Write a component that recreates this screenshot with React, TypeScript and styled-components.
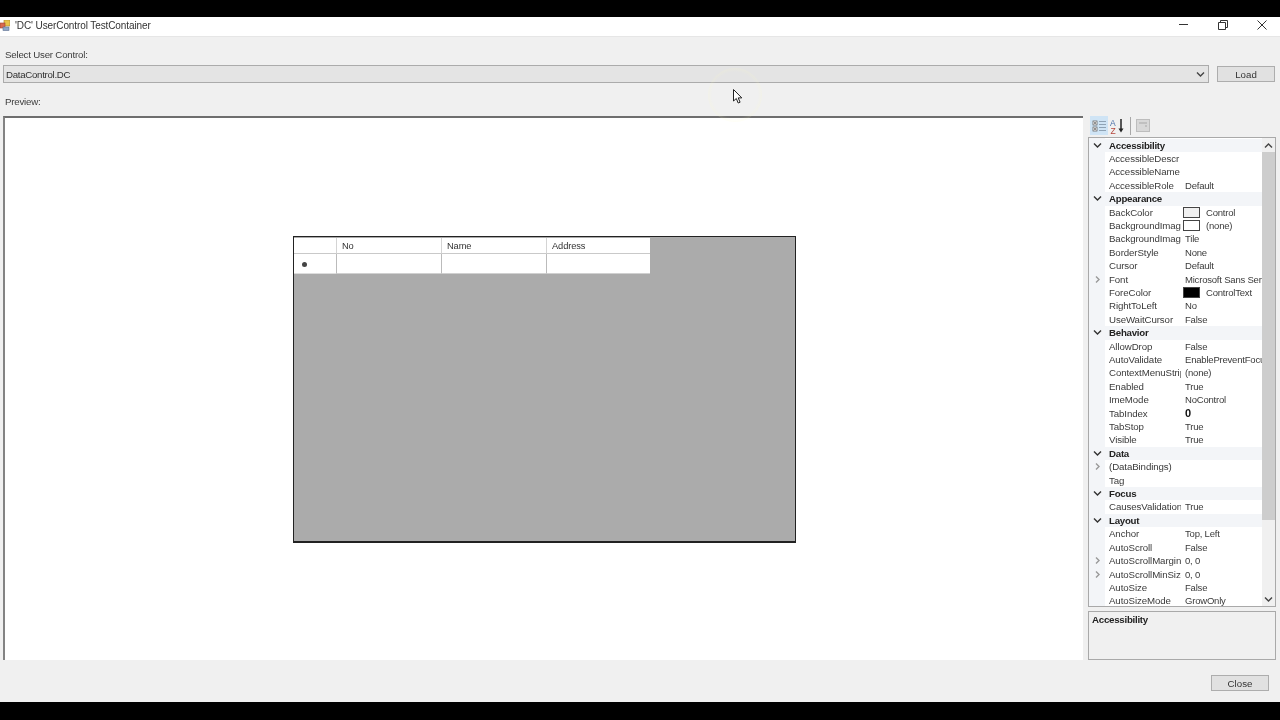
import React from "react";
import styled, { createGlobalStyle } from "styled-components";

const Global = createGlobalStyle`
  html, body { margin: 0; padding: 0; background: #000; }
  body { font-family: "Liberation Sans", Arial, sans-serif; font-size: 10px; color: #303030; overflow: hidden; }
  * { box-sizing: border-box; }
`;

const Screen = styled.div`
  position: relative;
  width: 1280px;
  height: 720px;
  background: #000;
  padding: 17px 0 18px;
  display: flex;
  flex-direction: column;
  filter: blur(0.35px);
`;
const TitleBar = styled.header`
  height: 19px;
  background: #fff;
  display: flex;
  align-items: center;
  flex: none;
  padding-bottom: 3px;
  font-size: 10px;
  letter-spacing: -0.1px;
  color: #333;
`;
const TitleText = styled.span`
  margin-left: 5px;
  flex: 1;
`;
const WinButton = styled.span`
  width: 39px;
  height: 16px;
  padding-left: 2px;
  display: flex;
  align-items: center;
  justify-content: center;
`;
const Form = styled.main`
  flex: 1;
  background: #f0f0f0;
  border-top: 1px solid #e6e6e6;
  display: flex;
  flex-direction: column;
  min-height: 0;
`;
const Label = styled.div`
  margin-left: 5px;
  height: 12px;
  line-height: 12px;
  font-size: 9.7px;
  letter-spacing: -0.2px;
  color: #3c3c3c;
`;
const SelectLabel = styled(Label)`
  margin-top: 12px;
`;
const PreviewLabel = styled(Label)`
  margin-top: 13px;
`;
const ComboRow = styled.div`
  display: flex;
  align-items: center;
  margin: 4px 5px 0 3px;
`;
const Combo = styled.div`
  width: 1206px;
  height: 18px;
  background: #e4e4e4;
  border: 1px solid #ababab;
  display: flex;
  align-items: center;
  justify-content: space-between;
  padding: 0 3px 0 2px;
  font-size: 9.7px;
  letter-spacing: -0.3px;
  color: #303030;
`;
const PushButton = styled.button`
  width: 58px;
  height: 16px;
  padding: 0;
  background: #e1e1e1;
  border: 1px solid #adadad;
  font: 9.7px "Liberation Sans", Arial, sans-serif;
  color: #333;
`;
const LoadButton = styled(PushButton)`
  margin-left: 8px;
`;
const Body = styled.div`
  display: flex;
  margin: 8px 0 0 3px;
  height: 544px;
`;
const PreviewPane = styled.section`
  width: 1080px;
  background: #fff;
  border-left: 2px solid #838383;
  border-top: 2px solid #6e6e6e;
  padding: 118px 0 0 288px;
`;
const DataGrid = styled.div`
  width: 503px;
  height: 307px;
  background: #ababab;
  border: 1px solid #222;
  border-width: 1px 1px 2px 1px;
  padding-top: 1px;
`;
const GridTable = styled.div`
  display: grid;
  grid-template-columns: 42px 105px 105px 104px;
  grid-template-rows: 16px 20px;
  width: 356px;
  background: #fff;
`;
const HeadCell = styled.div`
  border-bottom: 1px solid #c9c9c9;
  border-left: 1px solid #d4d4d4;
  padding-left: 5px;
  font-size: 9.3px;
  letter-spacing: -0.1px;
  line-height: 16px;
  color: #333;
  &:first-child { border-left: 0; }
`;
const RowHead = styled.div`
  display: flex;
  align-items: center;
  padding: 2px 0 0 8px;
  border-bottom: 1px solid #ddd;
`;
const Dot = styled.span`
  width: 5px;
  height: 5px;
  border-radius: 50%;
  background: #444;
`;
const Cell = styled.div`
  border-left: 1px solid #bbb;
  border-bottom: 1px solid #d0d0d0;
`;
const PropsColumn = styled.aside`
  width: 188px;
  margin-left: 5px;
  display: flex;
  flex-direction: column;
`;
const ToolBar = styled.div`
  height: 21px;
  display: flex;
  align-items: center;
  padding: 0 0 2px 2px;
`;
const ToolButton = styled.span<{ $active?: boolean }>`
  width: 18px;
  height: 19px;
  display: flex;
  align-items: center;
  justify-content: center;
  background: ${(p) => (p.$active ? "#cfe4f5" : "transparent")};
`;
const ToolSep = styled.span`
  width: 1px;
  height: 18px;
  margin: 0 5px 0 4px;
  background: #a8a8a8;
`;
const PropGrid = styled.div`
  height: 470px;
  border: 1px solid #a9a9a9;
  background: #fff;
  display: flex;
`;
const PropList = styled.div`
  flex: 1;
  min-width: 0;
  padding-top: 0.5px;
  background: linear-gradient(90deg, #f3f5f8 16px, #fff 16px);
`;
const Row = styled.div<{ $cat?: boolean }>`
  height: 13.41px;
  line-height: 13.41px;
  display: flex;
  align-items: center;
  font-size: 9.7px;
  letter-spacing: -0.1px;
  color: #3a3a3a;
  white-space: nowrap;
  background: ${(p) => (p.$cat ? "#f3f5f8" : "transparent")};
`;
const Gutter = styled.span`
  width: 16px;
  flex: none;
  display: flex;
  justify-content: center;
  align-items: center;
`;
const Category = styled.span`
  margin-left: 4px;
  font-weight: 700;
  font-size: 9.7px;
  letter-spacing: -0.25px;
  color: #222;
`;
const Name = styled.span<{ $wide?: boolean }>`
  width: ${(p) => (p.$wide ? "150px" : "72px")};
  margin-left: 4px;
  flex: none;
  overflow: hidden;
`;
const Value = styled.span<{ $bold?: boolean }>`
  margin-left: 4px;
  flex: 1;
  min-width: 0;
  overflow: hidden;
  display: flex;
  align-items: center;
  font-size: ${(p) => (p.$bold ? "11px" : "9.5px")};
  letter-spacing: -0.2px;
  font-weight: ${(p) => (p.$bold ? 700 : 400)};
  color: ${(p) => (p.$bold ? "#111" : "#3a3a3a")};
`;
const SwatchValue = styled(Value)`
  margin-left: 2px;
`;
const Swatch = styled.span<{ $color: string }>`
  width: 17px;
  height: 11px;
  margin-right: 6px;
  flex: none;
  background: ${(p) => p.$color};
  border: 1px solid #444;
`;
const ScrollBar = styled.div`
  width: 13px;
  flex: none;
  background: #f0f0f0;
  display: flex;
  flex-direction: column;
  align-items: center;
`;
const ScrollEnd = styled.span`
  height: 14px;
  display: flex;
  align-items: center;
  justify-content: center;
`;
const Thumb = styled.span`
  width: 13px;
  height: 368px;
  background: #cdcdcd;
`;
const ScrollFill = styled.span`
  flex: 1;
`;
const Help = styled.div`
  height: 49px;
  margin-top: 4px;
  border: 1px solid #a9a9a9;
  padding: 1px 3px;
  font-weight: 700;
  font-size: 9.7px;
  letter-spacing: -0.25px;
  line-height: 13px;
  color: #222;
`;
const Footer = styled.footer`
  display: flex;
  justify-content: flex-end;
  padding: 15px 11px 0 0;
`;
const CursorGlow = styled.div`
  position: absolute;
  left: 708px;
  top: 68px;
  width: 54px;
  height: 54px;
  border-radius: 50%;
  background: radial-gradient(circle, rgba(255,255,210,0) 60%, rgba(255,252,190,0.3) 82%, rgba(255,255,220,0) 100%);
  pointer-events: none;
`;
const CursorIcon = styled.svg`
  position: absolute;
  left: 733px;
  top: 89px;
`;

const Chevron = ({ dir, color }: { dir: "down" | "right" | "up"; color: string }) => (
  <svg width="9" height="7" viewBox="0 0 9 7" fill="none" stroke={color} strokeWidth="1.4">
    {dir === "down" && <path d="M1 1.5l3.5 3.5L8 1.5" />}
    {dir === "up" && <path d="M1 5.5L4.5 2 8 5.5" />}
    {dir === "right" && <path d="M3 .5L6 3.5 3 6.5" />}
  </svg>
);

type P =
  | { c: string }
  | { n: string; v?: string; s?: string; exp?: boolean; bold?: boolean };

const rows: P[] = [
  { c: "Accessibility" },
  { n: "AccessibleDescr" },
  { n: "AccessibleName" },
  { n: "AccessibleRole", v: "Default" },
  { c: "Appearance" },
  { n: "BackColor", v: "Control", s: "#f0f0f0" },
  { n: "BackgroundImage", v: "(none)", s: "#fff" },
  { n: "BackgroundImage", v: "Tile" },
  { n: "BorderStyle", v: "None" },
  { n: "Cursor", v: "Default" },
  { n: "Font", v: "Microsoft Sans Serif", exp: true },
  { n: "ForeColor", v: "ControlText", s: "#000" },
  { n: "RightToLeft", v: "No" },
  { n: "UseWaitCursor", v: "False" },
  { c: "Behavior" },
  { n: "AllowDrop", v: "False" },
  { n: "AutoValidate", v: "EnablePreventFocusChange" },
  { n: "ContextMenuStrip", v: "(none)" },
  { n: "Enabled", v: "True" },
  { n: "ImeMode", v: "NoControl" },
  { n: "TabIndex", v: "0", bold: true },
  { n: "TabStop", v: "True" },
  { n: "Visible", v: "True" },
  { c: "Data" },
  { n: "(DataBindings)", exp: true },
  { n: "Tag" },
  { c: "Focus" },
  { n: "CausesValidation", v: "True" },
  { c: "Layout" },
  { n: "Anchor", v: "Top, Left" },
  { n: "AutoScroll", v: "False" },
  { n: "AutoScrollMargin", v: "0, 0", exp: true },
  { n: "AutoScrollMinSize", v: "0, 0", exp: true },
  { n: "AutoSize", v: "False" },
  { n: "AutoSizeMode", v: "GrowOnly" },
];

export default function App() {
  return (
    <Screen>
      <Global />
      <TitleBar>
        <svg width="10" height="11" viewBox="0 0 10 11">
          <rect x="4" y="0" width="6" height="6" fill="#e8c34a" stroke="#a8842a" strokeWidth=".6" />
          <rect x="0" y="3" width="5" height="5" fill="#d9694f" stroke="#9c4030" strokeWidth=".6" />
          <rect x="3" y="7" width="6" height="3.5" fill="#8fa7c9" stroke="#5a6f8f" strokeWidth=".6" />
        </svg>
        <TitleText>'DC' UserControl TestContainer</TitleText>
        <WinButton>
          <svg width="10" height="10" viewBox="0 0 10 10"><path d="M0 4.5h9" stroke="#333" strokeWidth="1" /></svg>
        </WinButton>
        <WinButton>
          <svg width="10" height="10" viewBox="0 0 10 10" fill="none" stroke="#333" strokeWidth="1">
            <path d="M.5 2.5h7v7h-7z" /><path d="M2.5 2.5V.5h7v7h-2" />
          </svg>
        </WinButton>
        <WinButton>
          <svg width="10" height="10" viewBox="0 0 10 10" fill="none" stroke="#333" strokeWidth="1"><path d="M.5.5l9 9M9.5.5l-9 9" /></svg>
        </WinButton>
      </TitleBar>
      <Form>
        <SelectLabel>Select User Control:</SelectLabel>
        <ComboRow>
          <Combo>
            <span>DataControl.DC</span>
            <Chevron dir="down" color="#444" />
          </Combo>
          <LoadButton>Load</LoadButton>
        </ComboRow>
        <PreviewLabel>Preview:</PreviewLabel>
        <Body>
          <PreviewPane>
            <DataGrid>
              <GridTable>
                <HeadCell />
                <HeadCell>No</HeadCell>
                <HeadCell>Name</HeadCell>
                <HeadCell>Address</HeadCell>
                <RowHead><Dot /></RowHead>
                <Cell />
                <Cell />
                <Cell />
              </GridTable>
            </DataGrid>
          </PreviewPane>
          <PropsColumn>
            <ToolBar>
              <ToolButton $active>
                <svg width="15" height="14" viewBox="0 0 15 14" fill="none">
                  <rect x="1" y="2" width="4" height="4" fill="#fff" stroke="#555" strokeWidth=".7" />
                  <rect x="1" y="8" width="4" height="4" fill="#fff" stroke="#555" strokeWidth=".7" />
                  <path d="M2 4h2M2 10h2" stroke="#222" />
                  <path d="M7 2.5h7M7 5.5h7M7 8.5h7M7 11.5h7" stroke="#8fa3b5" />
                </svg>
              </ToolButton>
              <ToolButton>
                <svg width="15" height="16" viewBox="0 0 15 16">
                  <text x="0" y="7.5" fontSize="8.5" fontFamily="Liberation Sans" fill="#4a6fa8">A</text>
                  <text x="0.5" y="15.5" fontSize="8.5" fontFamily="Liberation Sans" fill="#b5463c">Z</text>
                  <path d="M11 1v10" stroke="#222" strokeWidth="1.5" />
                  <path d="M8.5 10.5h5L11 14.5z" fill="#222" />
                </svg>
              </ToolButton>
              <ToolSep />
              <svg width="14" height="13" viewBox="0 0 14 13" fill="none">
                <rect x=".5" y=".5" width="13" height="12" fill="#d8d8d8" stroke="#bdbdbd" />
                <path d="M3 4h8M9 7h2" stroke="#a8a8a8" />
              </svg>
            </ToolBar>
            <PropGrid>
              <PropList>
                {rows.map((r, i) =>
                  "c" in r ? (
                    <Row key={i} $cat>
                      <Gutter><Chevron dir="down" color="#333" /></Gutter>
                      <Category>{r.c}</Category>
                    </Row>
                  ) : (
                    <Row key={i}>
                      <Gutter>{r.exp && <Chevron dir="right" color="#999" />}</Gutter>
                      <Name $wide={!r.v}>{r.n}</Name>
                      {r.s ? (
                        <SwatchValue>
                          <Swatch $color={r.s} />
                          {r.v}
                        </SwatchValue>
                      ) : (
                        r.v && <Value $bold={r.bold}>{r.v}</Value>
                      )}
                    </Row>
                  )
                )}
              </PropList>
              <ScrollBar>
                <ScrollEnd><Chevron dir="up" color="#444" /></ScrollEnd>
                <Thumb />
                <ScrollFill />
                <ScrollEnd><Chevron dir="down" color="#444" /></ScrollEnd>
              </ScrollBar>
            </PropGrid>
            <Help>Accessibility</Help>
          </PropsColumn>
        </Body>
        <Footer>
          <PushButton>Close</PushButton>
        </Footer>
      </Form>
      <CursorGlow />
      <CursorIcon width="10" height="15" viewBox="0 0 10 15">
        <path d="M.5.5v11.5l2.8-2.5 1.9 4.5 1.9-.8-1.9-4.3h3.6z" fill="#fff" stroke="#222" strokeWidth="1" />
      </CursorIcon>
    </Screen>
  );
}
